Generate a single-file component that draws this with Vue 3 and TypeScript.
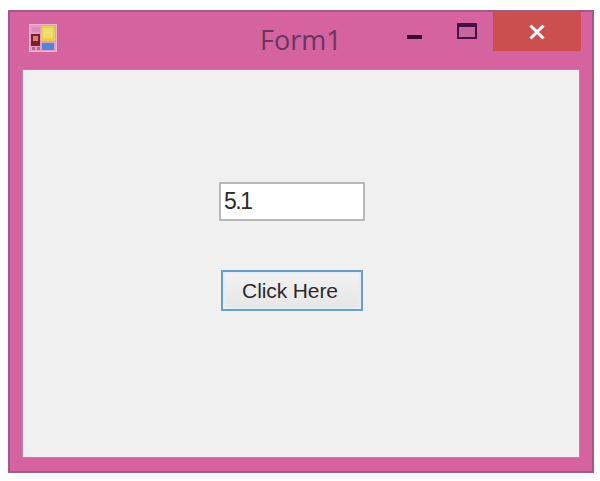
<script setup lang="ts">
const title: string = 'Form1'
const value: string = '5.1'
</script>

<template>
  <div class="page">
    <div class="window">
      <header class="titlebar">
        <svg class="app-icon" width="28" height="28" viewBox="0 0 28 28">
          <rect x="0.5" y="0.5" width="27" height="27" fill="#e59cc2" stroke="#eeb5d0" />
          <rect x="3" y="3" width="8" height="5" fill="#d98cb5" />
          <rect x="2" y="10" width="9" height="12" fill="#7c1f2a" />
          <rect x="4" y="12" width="5" height="5" fill="#d9806c" />
          <rect x="3" y="23" width="3" height="3" fill="#b5658f" />
          <rect x="8" y="23" width="3" height="3" fill="#b5658f" />
          <rect x="12" y="2" width="14" height="15" rx="1.5" fill="#e6d04a" />
          <rect x="14" y="4" width="10" height="10" fill="#efdd6c" />
          <rect x="13" y="19" width="12" height="7" rx="1" fill="#4f86d8" />
        </svg>
        <span class="title">{{ title }}</span>
        <div class="controls">
          <span class="btn-min"></span>
          <span class="btn-max"></span>
          <div class="btn-close">
            <svg width="18" height="16" viewBox="0 0 18 16">
              <path d="M2.5 1.5 15.5 14.5M15.5 1.5 2.5 14.5" stroke="#fff" stroke-width="3" fill="none" />
            </svg>
          </div>
        </div>
      </header>
      <main class="client">
        <input class="textbox" type="text" :value="value" />
        <button class="action" type="button">Click Here</button>
      </main>
    </div>
  </div>
</template>

<style>
html, body { margin: 0; background: #fff; }
</style>

<style scoped>
.page {
  width: 600px;
  height: 481px;
  box-sizing: border-box;
  padding: 10px 6px 8px 8px;
  background: #fff;
  font-family: "Liberation Sans", Arial, sans-serif;
}
.window {
  height: 100%;
  box-sizing: border-box;
  display: flex;
  flex-direction: column;
  background: #d4639f;
  border: 2px solid #a05a88;
  padding: 0 13px 14px 13px;
}
.titlebar {
  position: relative;
  height: 58px;
  flex: none;
  display: flex;
  align-items: flex-start;
}
.app-icon {
  margin: 12px 0 0 6px;
}
.title {
  position: absolute;
  left: 237px;
  top: 10px;
  font-family: "Open Sans", sans-serif;
  font-size: 27px;
  line-height: 36px;
  color: #6a3560;
}
.controls {
  margin-left: auto;
  margin-right: -2px;
  display: flex;
  align-items: flex-start;
}
.btn-min {
  width: 15px;
  height: 4px;
  margin: 23px 35px 0 0;
  background: #3d0a38;
}
.btn-max {
  width: 20px;
  height: 16px;
  box-sizing: border-box;
  margin: 11px 16px 0 0;
  border: 2px solid #4a0e46;
  border-top-width: 4px;
  background: #c5679c;
}
.btn-close {
  width: 88px;
  height: 39px;
  display: flex;
  align-items: center;
  justify-content: center;
  background: #cb4f4f;
}
.client {
  flex: 1;
  display: flex;
  flex-direction: column;
  align-items: flex-start;
  background: #f0f0f0;
  padding: 112px 0 0 196px;
  box-shadow: 0 0 0 1px #c07fa5;
}
.textbox {
  width: 146px;
  height: 39px;
  box-sizing: border-box;
  border: 2px solid #b8b8b8;
  background: #fff;
  padding: 0 3px;
  margin: 0;
  font-family: "Liberation Sans", Arial, sans-serif;
  font-size: 23px;
  letter-spacing: -1.5px;
  color: #2a2a2a;
  outline: none;
}
.action {
  width: 142px;
  height: 41px;
  box-sizing: border-box;
  margin: 49px 0 0 2px;
  padding: 0 4px 0 0;
  border: 2px solid #6a9fc2;
  box-shadow: inset 0 0 0 2px #dff0fa;
  background: linear-gradient(#f2f2f2, #e6e6e6);
  font-family: "Liberation Sans", Arial, sans-serif;
  font-size: 21px;
  letter-spacing: -0.1px;
  color: #2a2a2a;
}
</style>
